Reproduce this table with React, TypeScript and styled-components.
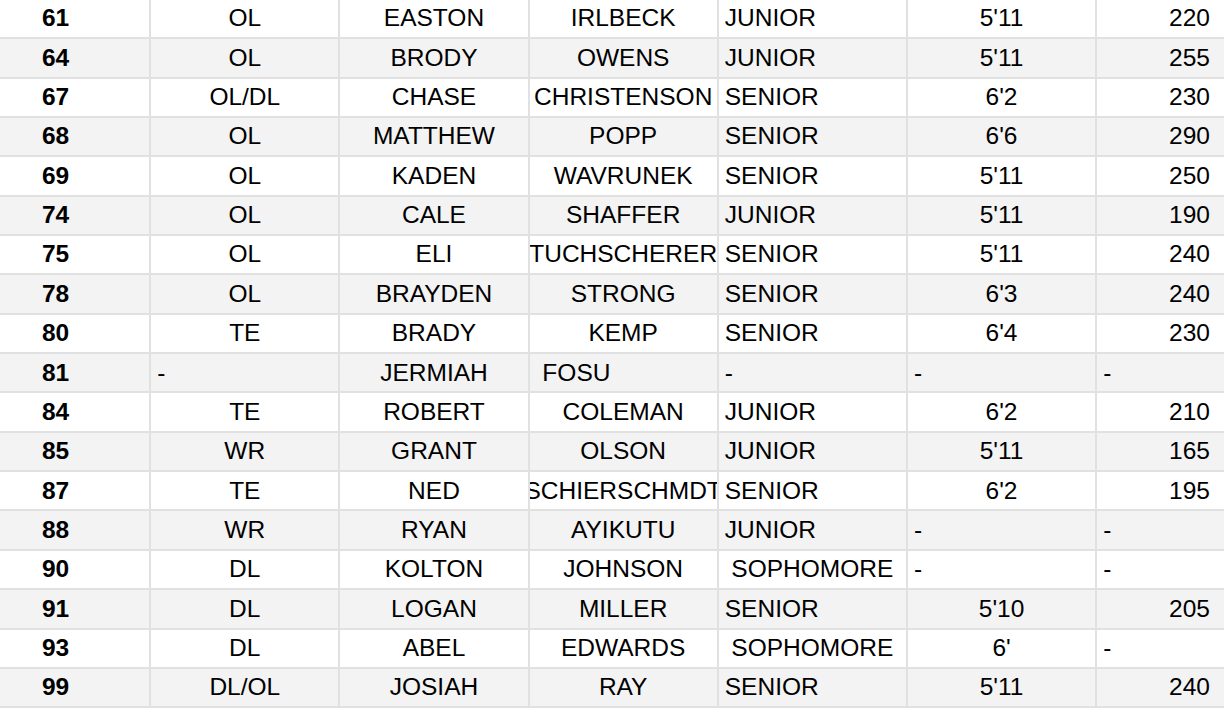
import React from 'react'
import styled, { createGlobalStyle } from 'styled-components'

const GlobalStyle = createGlobalStyle`
  html, body {
    margin: 0;
    background: #fff;
    overflow: hidden;
  }
`

type Align = 'left' | 'center' | 'right'

const justify: Record<Align, string> = {
  left: 'flex-start',
  center: 'center',
  right: 'flex-end',
}

const Sheet = styled.div`
  display: flex;
  flex-direction: column;
  margin-left: -38px;
  width: 1262px;
  font-family: 'Liberation Sans', Arial, sans-serif;
  font-size: 24.5px;
  color: #000;
`

const Row = styled.div<{ $band: boolean }>`
  display: grid;
  grid-template-columns: repeat(6, 189.2px) 1fr;
  height: 39.35px;
  box-sizing: border-box;
  border-bottom: 2px solid #e1e1e1;
  background: ${(p) => (p.$band ? '#f3f3f3' : '#fff')};
`

const Cell = styled.div<{ $align: Align; $bold?: boolean; $last?: boolean }>`
  display: flex;
  align-items: center;
  justify-content: ${(p) => justify[p.$align]};
  padding: ${(p) => (p.$last ? '0 14px 0 6px' : '0 6px')};
  border-right: ${(p) => (p.$last ? 'none' : '2px solid #e1e1e1')};
  overflow: hidden;
  white-space: pre;
  line-height: 1;
  font-weight: ${(p) => (p.$bold ? 700 : 400)};
`

const players: string[][] = [
  ['61', 'OL', 'EASTON', 'IRLBECK', 'JUNIOR', "5'11", '220'],
  ['64', 'OL', 'BRODY', 'OWENS', 'JUNIOR', "5'11", '255'],
  ['67', 'OL/DL', 'CHASE', 'CHRISTENSON', 'SENIOR', "6'2", '230'],
  ['68', 'OL', 'MATTHEW', 'POPP', 'SENIOR', "6'6", '290'],
  ['69', 'OL', 'KADEN', 'WAVRUNEK', 'SENIOR', "5'11", '250'],
  ['74', 'OL', 'CALE', 'SHAFFER', 'JUNIOR', "5'11", '190'],
  ['75', 'OL', 'ELI', 'TUCHSCHERER', 'SENIOR', "5'11", '240'],
  ['78', 'OL', 'BRAYDEN', 'STRONG', 'SENIOR', "6'3", '240'],
  ['80', 'TE', 'BRADY', 'KEMP', 'SENIOR', "6'4", '230'],
  ['81', '-', 'JERMIAH', ' FOSU', '-', '-', '-'],
  ['84', 'TE', 'ROBERT', 'COLEMAN', 'JUNIOR', "6'2", '210'],
  ['85', 'WR', 'GRANT', 'OLSON', 'JUNIOR', "5'11", '165'],
  ['87', 'TE', 'NED', 'SCHIERSCHMDT', 'SENIOR', "6'2", '195'],
  ['88', 'WR', 'RYAN', 'AYIKUTU', 'JUNIOR', '-', '-'],
  ['90', 'DL', 'KOLTON', 'JOHNSON', 'SOPHOMORE', '-', '-'],
  ['91', 'DL', 'LOGAN', 'MILLER', 'SENIOR', "5'10", '205'],
  ['93', 'DL', 'ABEL', 'EDWARDS', 'SOPHOMORE', "6'", '-'],
  ['99', 'DL/OL', 'JOSIAH', 'RAY', 'SENIOR', "5'11", '240'],
]

// default alignment per column, like the sheet's formatting
const columnAlign: Align[] = ['center', 'center', 'center', 'center', 'left', 'center', 'right']

function alignFor(col: number, value: string): Align {
  if (col > 0 && value === '-') return 'left'
  if (value.startsWith(' ')) return 'left'
  if (value === 'SOPHOMORE') return 'center'
  return columnAlign[col]
}

export default function App() {
  return (
    <>
      <GlobalStyle />
      <Sheet>
        {players.map((row, i) => (
          <Row key={row[0]} $band={i % 2 === 1}>
            {row.map((value, col) => (
              <Cell
                key={col}
                $align={alignFor(col, value)}
                $bold={col === 0}
                $last={col === row.length - 1}
              >
                {value}
              </Cell>
            ))}
          </Row>
        ))}
      </Sheet>
    </>
  )
}
